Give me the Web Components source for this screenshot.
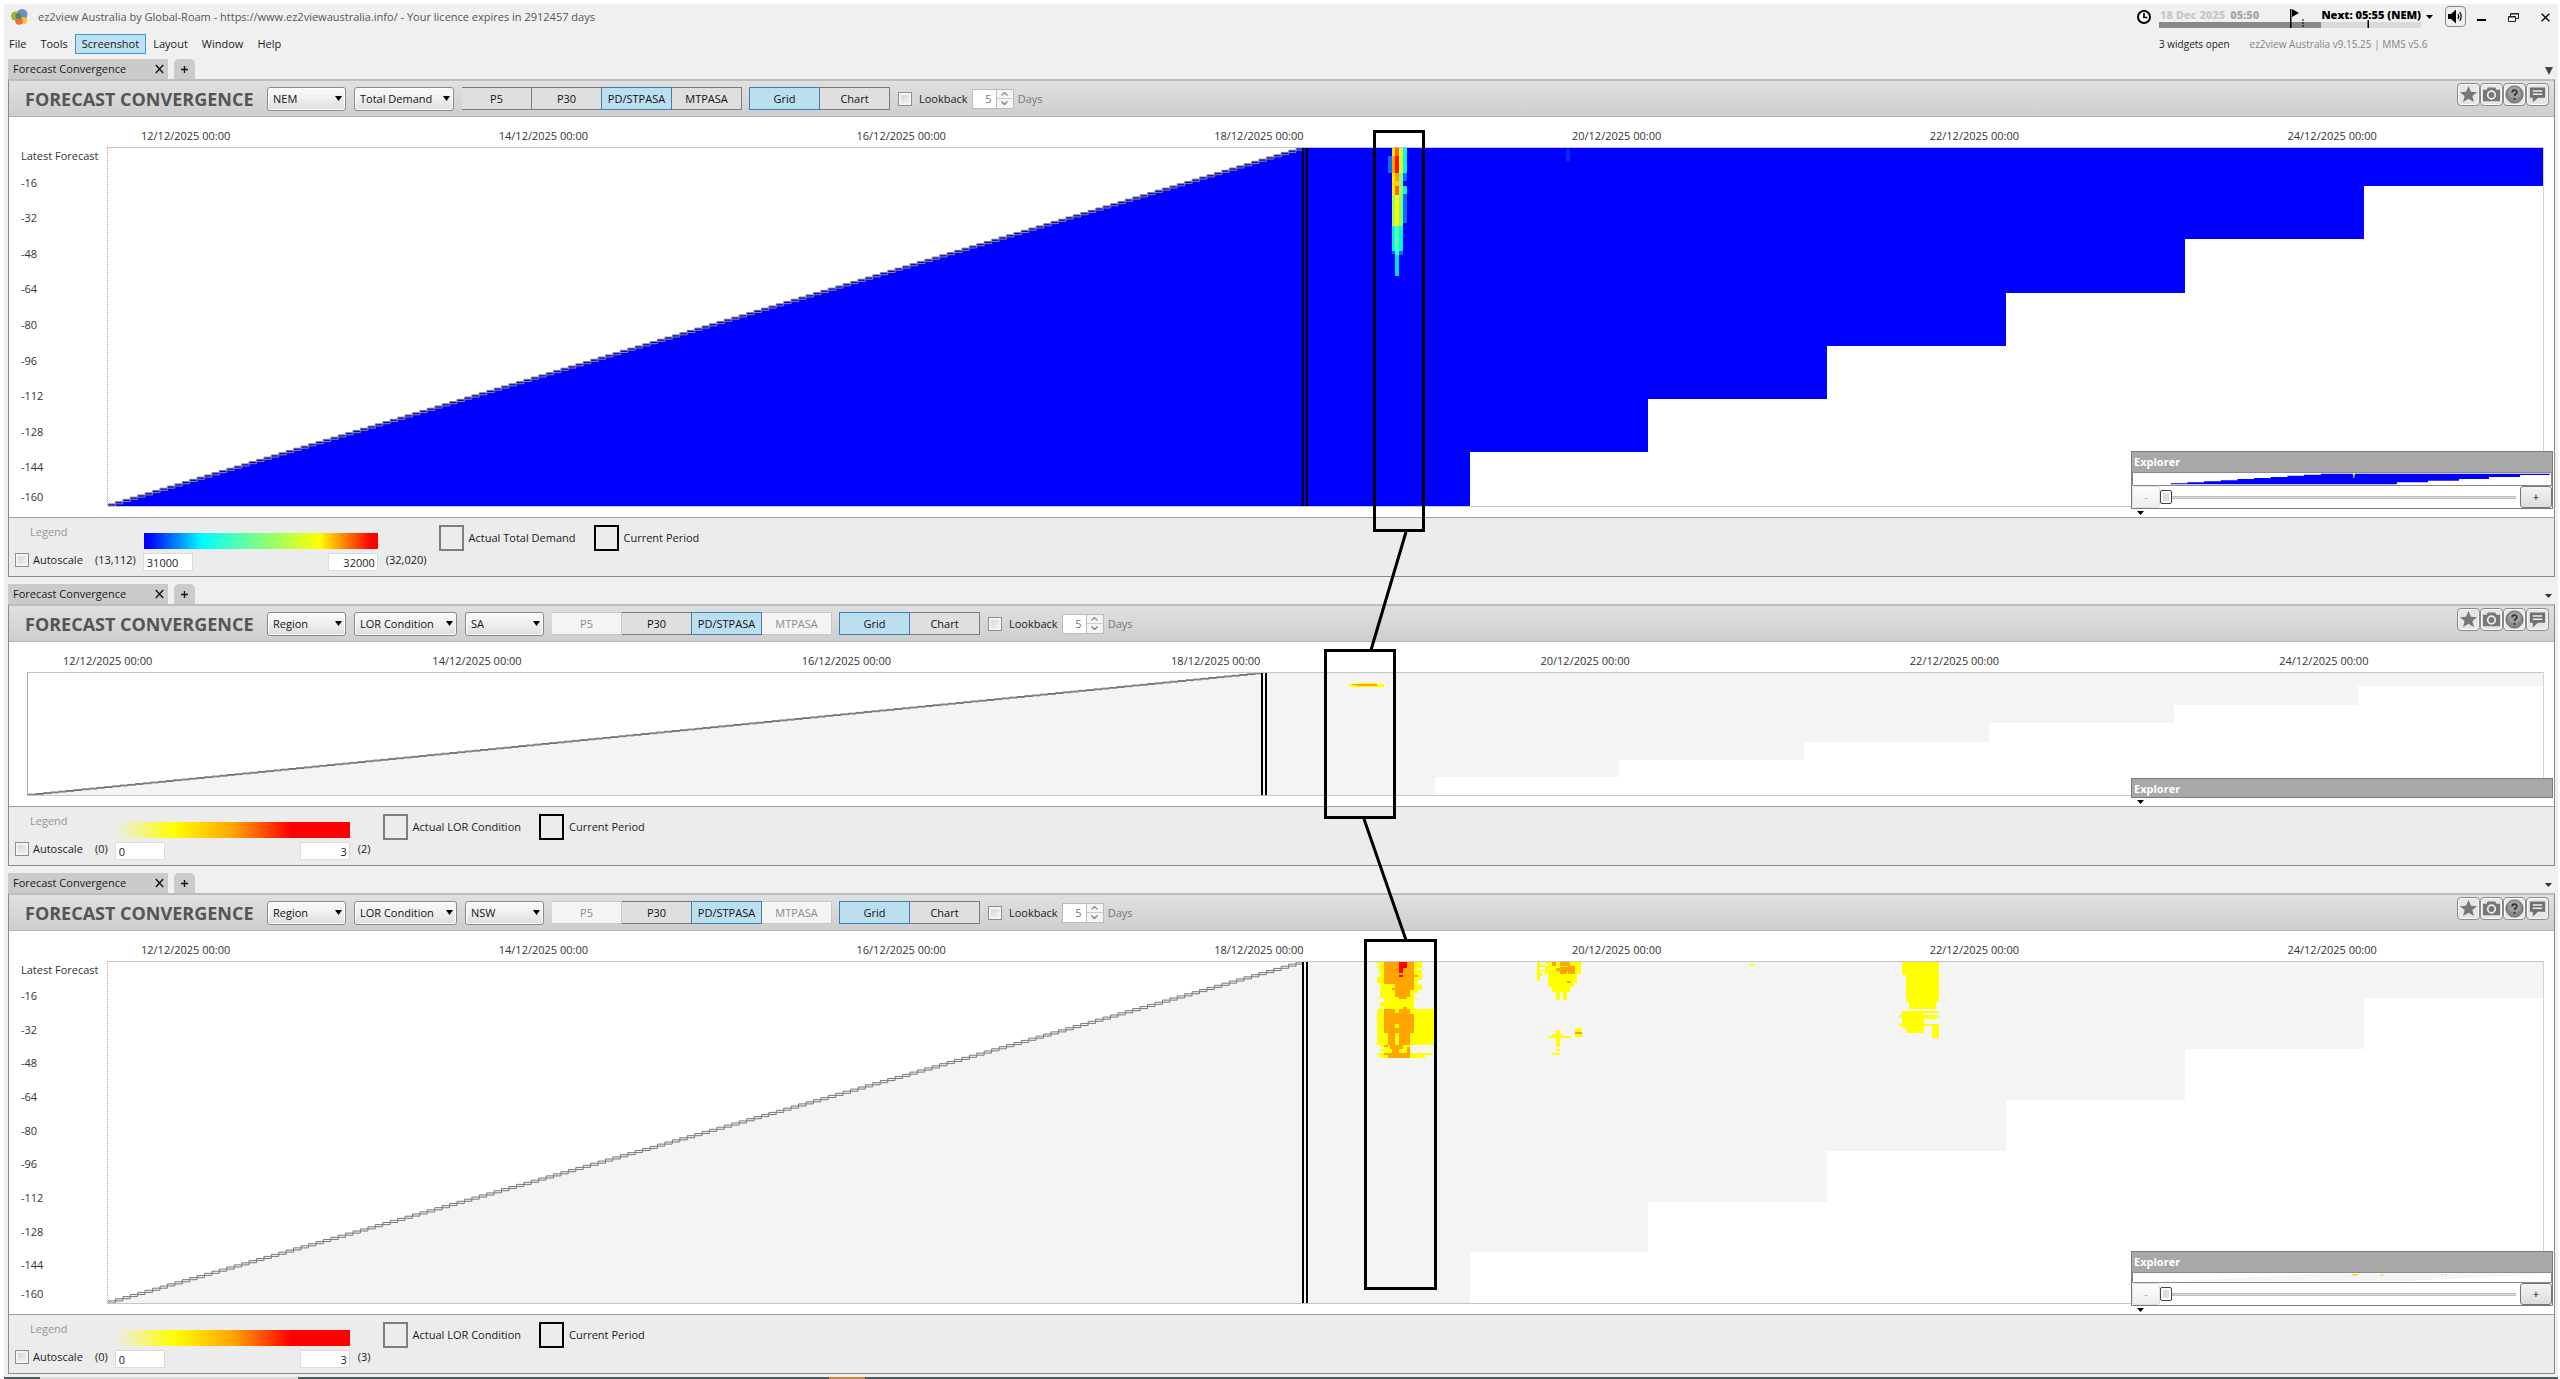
<!DOCTYPE html>
<html lang="en">
<head>
<meta charset="utf-8">
<title>ez2view Australia</title>
<style>
  body { margin: 0; background: #fff; font: 11px/16px "Open Sans", "Noto Sans", sans-serif; color: #1a1a1a; }
</style>
</head>
<body>
<ez-app>
  <ez-header slot="header"></ez-header>
  <ez-widget kind="demand" area="NEM" measure="Total Demand" tab-arrow="large"></ez-widget>
  <ez-widget kind="sa" area="Region" measure="LOR Condition" region="SA"></ez-widget>
  <ez-widget kind="nsw" area="Region" measure="LOR Condition" region="NSW"></ez-widget>
</ez-app>

<script>
const define = (name, html, setup) => customElements.define(name, class extends HTMLElement {
  connectedCallback() {
    if (this.shadowRoot) return;
    const root = this.attachShadow({ mode: "open" });
    root.innerHTML = "<style>*{box-sizing:border-box}button,input,select{font:inherit;color:inherit;margin:0}</style>" +
      (typeof html === "function" ? html(this) : html);
    if (setup) setup(this, root);
  }
});

/* ---------- outlined cells along the leading edge ---------- */
function stairs(x0, y0, x1, y1, n) {
  const w = (x1 - x0) / n, h = (y0 - y1) / n;
  let fill = `M${x0} ${y0}`, cells = "";
  for (let i = 0; i < n; i++) {
    const x = x0 + i * w, y = y0 - (i + 1) * h;
    fill += `V${y.toFixed(1)}H${(x + w).toFixed(1)}`;
    cells += `M${x.toFixed(1)} ${y.toFixed(1)}h${w.toFixed(1)}v${h.toFixed(1)}h-${w.toFixed(1)}z`;
  }
  return { fill, cells };
}
function rightSteps(xs, ys) {
  let d = `H${xs[0]}`;
  xs.forEach((x, i) => { d += `${i ? "H" + x : ""}V${ys[i]}`; });
  return d + "Z";
}
/* x1 y1 x2 y2 quadruples -> path of boxes */
const boxes = list => list.trim().split(/\s*;\s*/).filter(Boolean).map(r => {
  const [a, b, c, d] = r.split(/\s+/).map(Number);
  return `M${a} ${b}H${c}V${d}H${a}z`;
}).join("");

const heatDemand = [
  ["#0a6cff", "1388 156 1392 173;1403 173 1407 181;1392 251 1395 254;1403 194 1407 223;1399 251 1403 255"],
  ["#ffe600", "1392 148 1395 156;1392 173 1395 195"], ["#ffa200", "1392 156 1395 173;1395 173 1399 181"],
  ["#a4ff5a", "1392 195 1395 226;1399 186 1403 195"], ["#00f6ff", "1392 226 1395 251;1399 226 1403 251;1403 148 1407 173;1403 186 1407 194"],
  ["#ff6600", "1395 148 1399 156;1395 186 1399 195"], ["#ff1200", "1395 156 1399 173"],
  ["#ffcf00", "1395 181 1399 186"], ["#f8ff00", "1395 195 1399 226"], ["#64ff98", "1395 226 1399 251"],
  ["#30ffd0", "1395 251 1399 255"], ["#00dcff", "1395 255 1399 276"], ["#d4ff28", "1399 148 1403 173"],
  ["#7cff80", "1399 173 1403 186;1399 195 1403 226"], ["#0a28ff", "1566 149 1570 161"]
].map(([c, l]) => `<path fill="${c}" d="${boxes(l)}"/>`).join("");

const heatNsw = `<g transform="translate(1340 930) scale(.3333)">
<path fill="#ff0" d="${boxes(`120 95 222 190;132 190 222 237;120 190 132 204;120 216 132 230;110 95 120 103;110 108 120 115;115 115 120 130;110 142 120 158;110 203 120 208;
222 95 233 190;222 203 233 208;233 95 245 113;233 120 245 150;233 165 245 180;
110 237 282 345;120 345 210 350;132 350 210 369;120 358 132 362;110 369 278 375;120 375 255 383;
589 95 600 153;600 106 613 112;600 120 613 124;600 130 606 137;613 95 723 133;613 108 618 137;623 133 711 160;623 160 701 172;636 172 690 185;647 185 658 210;667 185 679 210;
647 300 658 350;636 313 668 318;623 318 691 323;704 294 725 322;647 357 658 362;636 369 658 375`)}"/>
<path fill="#f4f4f4" d="${boxes(`613 95 622 108;711 133 723 137;701 160 711 172`)}"/>
<path fill="#ff0" d="${boxes(`613 95 622 103`)}"/>
<path fill="#ffa500" d="${boxes(`132 95 222 163;156 163 222 180;165 180 210 200;176 200 200 208;222 134 233 140;
132 237 165 310;176 237 210 345;188 232 200 237;165 248 176 282;165 293 176 310;210 253 222 310;144 310 165 345;132 345 144 350;150 345 188 358;156 358 176 369;132 369 176 375;144 375 176 383;176 369 210 383;188 350 210 369;
636 95 646 107;658 95 690 108;647 115 658 122;658 112 704 122;658 122 679 133;682 108 704 133;679 153 691 158;704 306 725 312`)}"/>
<path fill="#ff0" d="${boxes(`188 350 200 369;156 163 165 175;144 163 156 180`)}"/>
<path fill="#f00" d="${boxes(`176 95 200 113;176 113 188 130;176 134 188 140`)}"/></g>
<g transform="translate(1500 950) scale(.3333)" fill="#ff0"><path d="${boxes(`748 42 760 47;1205 36 1316 75;1217 75 1316 155;1227 155 1308 177;1205 183 1316 188;1205 188 1272 235;1195 195 1316 200;1272 200 1308 206;1195 222 1205 227;1217 235 1272 250;1272 222 1316 227;1296 222 1316 263`)}"/></g>`;

const charts = {
  demand: { origin: [107, 148, 2436, 358], start: [107, 506, 1303, 148, 161], color: "#00f", edge: "#8c8c78",
    xs: [2543, 2364, 2185, 2006, 1827, 1648, 1470], ys: [186, 239, 293, 346, 399, 452, 506], heat: heatDemand, now: 1303 },
  sa: { origin: [27, 672, 2516, 122], start: [27, 794, 1262, 672, 161], color: "#f4f4f4", edge: "#707070",
    xs: [2543, 2358, 2174, 1989, 1804, 1619, 1435], ys: [685, 704, 722, 741, 759, 776, 794],
    heat: `<path fill="#ff0" d="M1349 683h8v-1h20v1h7v3h-35z"/><path fill="#ffa500" d="M1352 683h25v1h-25zM1357 683h20v2h-20z"/>`, now: 1262 },
  nsw: { origin: [107, 962, 2436, 341], start: [107, 1303, 1303, 962, 161], color: "#f4f4f4", edge: "#777",
    xs: [2543, 2364, 2185, 2006, 1827, 1648, 1470], ys: [998, 1049, 1100, 1151, 1202, 1252, 1303], heat: heatNsw, now: 1303 }
};

/* ---------- heat map with its two axes ---------- */
define("ez-heatmap", el => {
  const kind = el.getAttribute("kind"), c = charts[kind], [x, y, w, h] = c.origin, s = stairs(...c.start);
  const axis = kind === "sa" ? "" : `<div class="rows">${["Latest Forecast", ...Array.from({ length: 10 }, (_, i) => "-" + 16 * (i + 1))].map(t => `<span>${t}</span>`).join("")}</div>`;
  return `<style>
  :host{display:grid;grid-template-columns:${kind === "sa" ? 18 : 98}px 1fr;padding:0 11px 10px 0;background:#fff;color:#333}
  .dates{grid-column:2;height:30px;padding:8px 0 0 ${kind === "sa" ? 36 : 34}px;display:grid;grid-template-columns:repeat(6,minmax(0,7fr)) minmax(0,5fr);line-height:22px;white-space:nowrap}
  .rows{grid-column:1;display:flex;flex-direction:column;padding:0 0 2px 12px;white-space:nowrap}
  .rows span{flex:1;display:flex;align-items:center}
  .rows span:first-child{flex:0 0 18px}
  .rows span:last-child{flex:0 0 20px;align-items:flex-end}
  .plot{grid-column:2;border:1px solid #c6c6c6;border-width:1px 0;border-left:1px ${kind === "sa" ? "solid" : "dotted"} #aaa;box-shadow:1px 0 #d4d4d4}
  svg{display:block;width:100%;height:${h}px}
  </style>
  <div class="dates">${[12, 14, 16, 18, 20, 22, 24].map(d => `<span>${d}/12/2025 00:00</span>`).join("")}</div>${axis}
  <div class="plot"><svg viewBox="${x} ${y} ${w} ${h}" preserveAspectRatio="none" aria-hidden="true">
    <path fill="${c.color}" shape-rendering="crispEdges" d="${s.fill}${rightSteps(c.xs, c.ys)}"/>
    <path fill="none" stroke="${c.edge}" stroke-width="1" d="${s.cells}"/>
    <g shape-rendering="crispEdges">${c.heat}
    <path fill="#000" d="M${c.now - 2} ${y}h2v${h}h-2zM${c.now + 2} ${y}h2v${h}h-2z"/></g>
  </svg></div>`;
});

/* ---------- small controls ---------- */
define("ez-select", el => `<style>
  :host{display:inline-grid;width:${el.getAttribute("width")}px;height:24px;font-size:12px}
  select,svg{grid-area:1/1}
  select{appearance:none;width:100%;height:24px;padding:0 0 0 5px;border:1px solid #8a8a8a;border-radius:3px;background:linear-gradient(#fafafa,#efefef 50%,#dedede);box-shadow:inset 0 0 0 1px #fff;color:#111;font-size:11px}
  svg{align-self:center;justify-self:end;margin-right:4px;pointer-events:none}
  </style><select aria-label="${el.getAttribute("label")}"><option>${el.getAttribute("value")}</option></select>
  <svg width="7" height="5" viewBox="0 0 7 5"><path d="M0 0h7L3.5 5z"/></svg>`);

define("ez-toggle-group", el => `<style>
  :host{display:inline-flex}
  button{width:70px;height:23px;padding:0;border:1px solid #7c7c7c;border-left-width:0;background:#dfdfdf;color:#111}
  button:first-child{border-left-width:1px}
  button[aria-pressed=true]{background:#bcdff0;border-color:#3c7fb1;box-shadow:-1px 0 #3c7fb1}
  button:disabled{background:#f4f4f4;border-color:#c8c8c8;color:#8c8c8c}
  </style>${el.getAttribute("items").split(",").map(t => {
    const on = t.startsWith("*"), off = t.startsWith("!");
    return `<button aria-pressed="${on}" ${off ? "disabled" : ""}>${t.replace(/^[*!]/, "")}</button>`;
  }).join("")}`);

define("ez-check", el => `<style>
  :host{display:inline-flex}
  label{display:flex;align-items:center;gap:${el.getAttribute("gap") || 5}px}
  input{appearance:none;width:14px;height:14px;border:1px solid #8e8f8f;background:linear-gradient(135deg,#cfd3d8,#f4f4f4);box-shadow:inset 0 0 0 2px #f4f4f4}
  </style><label><input type="checkbox"><slot></slot></label>`);

const icons = {
  star: ["Favourite", `<path fill="#777" d="M10 1l2.600 6 6.400.500-4.900 4.200 1.600 6.300L10 14.600 4.300 18l1.600-6.300L1 7.500 7.400 7z"/>`],
  camera: ["Snapshot", `<path fill="#777" d="M1 5h4l1-2.500h8L15 5h4v12H1z"/><circle cx="10" cy="10.500" r="4" fill="#777" stroke="#eee" stroke-width="1.800"/>`],
  help: ["Help", `<circle cx="10" cy="10" r="9" fill="#888" stroke="#666"/><circle cx="10" cy="8" r="6.500" fill="#a0a0a0"/><path d="M7.500 8c0-3.500 5-3.200 5-.5 0 1.700-2.400 1.800-2.400 4M10 13.500v2" fill="none" stroke="#333" stroke-width="1.800"/>`],
  note: ["Comment", `<path fill="#707070" d="M2 2.500h16v11h-7.500L5 18.500v-5H2z"/><path d="M5 6.300h10M5 9.800h10" stroke="#eee" stroke-width="1.700"/>`]
};
define("ez-icon-buttons", `<style>
  :host{display:flex}
  button{width:23px;height:23px;padding:1px;border:1px solid #8a8a8a;border-radius:4px;background:#e6e6e6;box-shadow:inset 0 0 0 1px #fafafa}
  svg{display:block;width:19px;height:19px}
  </style>${Object.values(icons).map(([l, p]) => `<button aria-label="${l}"><svg viewBox="0 0 20 20">${p}</svg></button>`).join("")}`);

/* ---------- explorer pop-up ---------- */
define("ez-explorer", el => {
  const kind = el.getAttribute("kind");
  let left = "M213 162";
  for (let i = 0; i < 10; i++) left += `V${(160 - i * 3.200).toFixed(1)}H${263 + i * 50 - (i === 9 ? 50 : 0)}`;
  const preview = kind === "demand"
    ? `<svg height="12" viewBox="100 129 1253 36" preserveAspectRatio="none"><path fill="#00f" d="${left}V131H1349V135H1260V141H1167V147H1077V152H984V157H891V163H213Z"/><path fill="#ff0" d="M759 131h6v6h-6z"/><path fill="#3fb" d="M760 137h4v7h-4z"/></svg>`
    : `<svg height="9" viewBox="220 129 1253 30" preserveAspectRatio="none"><path fill="#f5f5f5" d="M330 158L780 131H1465L1010 158z"/><path fill="#fc0" d="M875 133h20v4h-20zM961 134h10v3h-10zM1145 133h4v3h-4zM1156 133h5v3h-5z"/></svg>`;
  return `<style>
  :host{display:block;width:422px}
  .box{border:1px solid #7c7c7c;background:#fff}
  h3{margin:0;padding:0 2px;height:${kind === "sa" ? 18 : 20}px;font:bold 11px/20px "Open Sans",sans-serif;color:#fff;background:#a8a8a8}
  .view{border:1px solid #8a8a8a;border-width:1px 1px 1px}
  .view svg{display:block;width:100%}
  .zoom{display:flex;align-items:center;height:22px}
  .zoom button{width:28px;height:22px;padding:0;border:1px solid #ddd;border-radius:3px;background:linear-gradient(#fdfdfd,#eee);color:#aaa}
  .zoom button:last-child{width:32px;border-color:#777;background:linear-gradient(#f4f4f4,#dcdcdc);color:#000}
  input{appearance:none;flex:1;height:16px;min-width:0;margin:0 4px 0 0;background:linear-gradient(#ddd,#ddd) center/100% 1px no-repeat,linear-gradient(#bbb,#bbb) center/100% 3px no-repeat}
  input::-webkit-slider-thumb{appearance:none;width:12px;height:14px;border:1px solid #444;border-radius:2px;background:#ddd;box-shadow:inset 0 0 0 2px #fff}
  .tip{display:block;margin:2px 0 0 6px;height:4px}
  </style><div class="box"><h3>Explorer</h3>${kind === "sa" ? "" : `<div class="view">${preview}</div>
  <div class="zoom"><button aria-label="Zoom out">-</button><input type="range" min="0" max="100" value="0" aria-label="Zoom"><button aria-label="Zoom in">+</button></div>`}</div>
  <svg class="tip" width="7" height="4" viewBox="0 0 7 4"><path d="M0 0h7L3.500 4z"/></svg>`;
});

/* ---------- legend ---------- */
define("ez-legend", el => {
  const g = n => el.getAttribute(n), demand = g("kind") === "demand";
  const ramp = demand ? "#00f 0%,#00f 2%,#0ff 25%,#7fff80 50%,#ff0 75%,#f00 97%" : "#ececec 0%,#ff0 25%,#ffa500 50%,#f00 75%";
  return `<style>
  :host{display:flex;height:59px;border-top:1px solid #a0a0a0;background:#ececec}
  .scale{display:grid;grid-template-columns:80px auto 235px auto;grid-template-rows:24px auto;align-content:start;padding:7px 0 0 6px}
  .name{padding-left:15px;line-height:14px;color:#969696}
  .ramp{grid-column:3;align-self:end;height:16px;background:linear-gradient(90deg,${ramp});margin-left:1px}
  .scale>span,ez-check{line-height:18px;align-self:center}
  .min{padding-right:7px}
  .max{padding-left:8px}
  .inputs{display:flex;justify-content:space-between;padding-top:4px}
  input{width:50px;height:18px;padding:0 3px;border:1px solid #dcdcdc;background:#fff;color:#222}
  input:last-child{text-align:right;padding-right:2px}
  .keys{display:flex;gap:18px;padding:9px 0 0 12px}
  .key{display:flex;gap:5px;height:22px;align-items:center;line-height:26px}
  .key::before{content:"";width:21px;height:22px;border:2px solid #7e7e7e}
  .key+.key::before{border-color:#000}
  </style>
  <div class="scale"><div class="name">Legend</div><div class="ramp"></div>
    <ez-check gap="4" style="grid-column:1">Autoscale</ez-check><span class="min">(${g("min")})</span>
    <div class="inputs"><input aria-label="Scale minimum" value="${g("from")}"><input aria-label="Scale maximum" value="${g("to")}"></div><span class="max">(${g("max")})</span></div>
  <div class="keys"><div class="key">Actual ${demand ? "Total Demand" : "LOR Condition"}</div><div class="key">Current Period</div></div>`;
});

/* ---------- a docked widget: tab, toolbar, chart, legend ---------- */
define("ez-widget", el => {
  const g = n => el.getAttribute(n), kind = g("kind"), region = g("region");
  const range = { demand: ["13,112", "31000", "32000", "32,020"], sa: ["0", "0", "3", "2"], nsw: ["0", "0", "3", "3"] }[kind];
  return `<style>
  :host{display:block;margin:0 3px 7px 4px}
  .tabs{display:flex;align-items:flex-end;gap:6px;height:20px}
  .tab{display:flex;align-items:center;justify-content:space-between;width:160px;height:20px;padding:0 4px 0 5px;background:#cbcbcb;line-height:20px}
  .tab button,.add,.more{border:0;background:none;padding:0;display:grid;place-items:center}
  .tab button{width:9px;height:12px}
  .add{width:21px;height:20px;border-radius:5px 5px 0 0;background:#cbcbcb}
  .more{width:9px;height:16px;margin-left:auto;margin-right:2px}
  .body{position:relative;border:1px solid #8a8a8a;border-top:2px solid #bdbdbd}
  .bar{display:flex;align-items:center;gap:8px;height:36px;padding:0 5px 0 16px;border-bottom:1px solid #b4b4b4;background:linear-gradient(#e0e0e0,#cecece)}
  h2{margin:0 -1px 0 0;width:235px;font:bold 18px/24px "Open Sans",sans-serif;color:#555;white-space:nowrap}
  .look{display:flex;align-items:center;gap:4px;color:#777}
  ez-check{color:#222}
  .spin{display:flex;height:20px;border:1px solid #bcbcbc;background:#f4f4f4}
  .spin input{width:23px;height:18px;padding:0 4px 0 0;border:0;background:#fff;color:#777;text-align:right}
  .spin div{display:grid;width:17px;border-left:1px solid #bcbcbc}
  .spin button{display:grid;place-items:center;padding:0;border:0;background:none;min-height:0}
  .spin button+button{border-top:1px solid #ccc}
  ez-icon-buttons{margin-left:auto;align-self:flex-start;margin-top:2px}
  ez-explorer{position:absolute;right:1px;bottom:61px}
  </style>
  <div class="tabs"><div class="tab">Forecast Convergence<button aria-label="Close tab"><svg width="9" height="10" viewBox="0 0 9 10"><path d="M.8 1l7.400 8M8.200 1L.8 9" stroke="#111" stroke-width="1.300"/></svg></button></div>
    <button class="add" aria-label="Add tab"><svg width="7" height="7" viewBox="0 0 7 7"><path d="M3.500 0v7M0 3.500h7" stroke="#111" stroke-width="1.400"/></svg></button>
    <button class="more" aria-label="Tab list">${g("tab-arrow") ? `<svg width="8" height="8" viewBox="0 0 8 8"><path fill="#444" d="M0 0h8L4 8z"/></svg>` : `<svg width="7" height="4" viewBox="0 0 7 4"><path fill="#333" d="M0 0h7L3.500 4z"/></svg>`}</button></div>
  <div class="body">
    <div class="bar"><h2>FORECAST CONVERGENCE</h2>
      <ez-select width="79" label="Area" value="${g("area")}"></ez-select>
      <ez-select width="${region ? 103 : 100}" label="Measure" value="${g("measure")}"></ez-select>
      ${region ? `<ez-select width="79" label="Region" value="${region}"></ez-select>` : ""}
      <ez-toggle-group items="${region ? "!P5,P30,*PD/STPASA,!MTPASA" : "P5,P30,*PD/STPASA,MTPASA"}"></ez-toggle-group>
      <ez-toggle-group items="*Grid,Chart"></ez-toggle-group>
      <div class="look"><ez-check gap="7">Lookback</ez-check>
        <div class="spin"><input aria-label="Lookback days" value="5"><div><button aria-label="More"><svg width="7" height="4" viewBox="0 0 7 4"><path fill="none" stroke="#999" stroke-width="1.500" d="M.5 3.500l3-3 3 3"/></svg></button><button aria-label="Fewer"><svg width="7" height="4" viewBox="0 0 7 4"><path fill="none" stroke="#888" stroke-width="1.500" d="M.5.500l3 3 3-3"/></svg></button></div></div>Days</div>
      <ez-icon-buttons></ez-icon-buttons></div>
    <ez-heatmap kind="${kind}"></ez-heatmap>
    <ez-legend kind="${kind}" min="${range[0]}" from="${range[1]}" to="${range[2]}" max="${range[3]}"></ez-legend>
    <ez-explorer kind="${kind}"></ez-explorer>
  </div>`;
});

/* ---------- window header ---------- */
define("ez-header", `<style>
  :host{display:flex;justify-content:space-between;height:55px;white-space:nowrap}
  .title{display:flex;align-items:center;gap:9px;height:26px;padding-left:7px;color:#555}
  nav{display:flex;margin-top:4px}
  nav button{height:20px;padding:0 6px;border:1px solid transparent;background:none;line-height:16px}
  nav button:first-child{padding-left:4px}
  nav .on{background:#bfe0f2;border-color:#3c9bd0}
  .status{display:flex;height:26px;align-items:flex-start}
  .clock{margin:6px 8px 0 0}
  .time{width:262px}
  .times{display:flex;height:21px;line-height:21px;font-weight:bold;padding-left:1px;color:#c9c9c9}
  .times b:nth-child(2){color:#a8a8a8;margin-left:5px}
  .times b:nth-child(3){color:#000;margin-left:auto}
  .track{display:block;width:100%;height:20px;margin-top:-17px}
  .drop{margin:11px 12px 0 5px}
  .sound{width:21px;height:21px;margin:2px 10px 0 0;padding:1px;border:1px solid #888;border-radius:4px;background:#eee}
  .win{display:grid;place-items:center;width:11px;height:26px;margin-right:21px;padding:0;border:0;background:none}
  .win:last-child{margin-right:7px}
  .info{display:flex;gap:20px;padding:6px 0 0 22px;font-size:10px}
  .info span+span{color:#858585}
  </style>
  <div><div class="title"><svg width="18" height="16" viewBox="0 0 18 16"><circle cx="11" cy="5.500" r="5.500" fill="#6f8fc4"/><circle cx="4.500" cy="7" r="4.500" fill="#8cbb3c"/><circle cx="12.500" cy="11.500" r="3.500" fill="#f3c52b"/><circle cx="8" cy="12" r="3.800" fill="#ef6b4a"/><circle cx="7.500" cy="7" r="3" fill="#4f8a5a"/></svg><span>ez2view Australia by Global-Roam - https://www.ez2viewaustralia.info/ - Your licence expires in 2912457 days</span></div>
  <nav><button>File</button><button>Tools</button><button class="on">Screenshot</button><button>Layout</button><button>Window</button><button>Help</button></nav></div>
  <div><div class="status">
    <svg class="clock" width="14" height="14" viewBox="0 0 14 14"><circle cx="7" cy="7" r="6" fill="#fff" stroke="#000" stroke-width="2"/><path d="M7 3v4.500h3.500" fill="none" stroke="#000" stroke-width="1.700"/></svg>
    <div class="time"><div class="times"><b>18 Dec 2025</b><b>05:50</b><b>Next: 05:55 (NEM)</b></div>
      <svg class="track" viewBox="0 0 262 20" preserveAspectRatio="none"><path fill="#d9d9d9" d="M0 14h262v6H0z"/><path fill="#888" d="M0 14h162v6H0z"/><path d="M131 1h1.500v19H131zM133 1l7 4-7 4zM208.500 12h1.500v8h-1.500z"/><path d="M144 11v9" stroke="#000" stroke-dasharray="2 1"/></svg></div>
    <svg class="drop" width="7" height="4" viewBox="0 0 7 4"><path d="M0 0h7L3.500 4z"/></svg>
    <button class="sound" aria-label="Sound"><svg width="17" height="17" viewBox="0 0 17 17"><path d="M1 6h3l5-4.500v14L4 11H1z"/><path d="M11 6q1.500 2.500 0 5M12.700 4.200q3 4.300 0 8.600" fill="none" stroke="#000" stroke-width="1.200"/></svg></button>
    <button class="win" aria-label="Minimise"><svg width="10" height="10" viewBox="0 0 10 10"><path d="M0 7h9v2H0z"/></svg></button>
    <button class="win" aria-label="Restore"><svg width="11" height="11" viewBox="0 0 11 11"><path fill="none" stroke="#222" d="M.5 4.500h7v5h-7zM.5 5h7M2.500 4V1.500h8v5H8M2.500 2h8"/></svg></button>
    <button class="win" aria-label="Close"><svg width="9" height="9" viewBox="0 0 9 9"><path d="M.7.7l7.600 7.600M8.300.7L.7 8.300" stroke="#111" stroke-width="1.500"/></svg></button></div>
  <div class="info"><span>3 widgets open</span><span>ez2view Australia v9.15.25 | MMS v5.6</span></div></div>`);

/* ---------- window frame, with the annotations drawn over the widgets ---------- */
define("ez-app", `<style>
  :host{display:block;position:relative;padding:4px 2px 0 4px;background:#fff}
  main{display:flow-root;background:#f0f0f0}
  footer{height:2px;margin-top:-4px;background:linear-gradient(90deg,#505a5a 0 1.400%,#dcdcdc 1.400% 11.500%,#505a5a 11.500% 32.300%,#c98a52 32.300% 33.700%,#505a5a 33.700%)}
  .marks{position:absolute;inset:0;width:100%;height:1379px;pointer-events:none}
  </style>
  <main><slot name="header"></slot><slot></slot></main><footer></footer>
  <svg class="marks" viewBox="0 0 2560 1379" preserveAspectRatio="none" aria-hidden="true"><path fill="none" stroke="#000" stroke-width="3" d="M1374.500 131.500h49v399h-49zM1325.500 650.500h69v167h-69zM1365.500 940.500h70v348h-70zM1406 532L1371 650M1364 819L1406 940"/></svg>`);
</script>
</body>
</html>
